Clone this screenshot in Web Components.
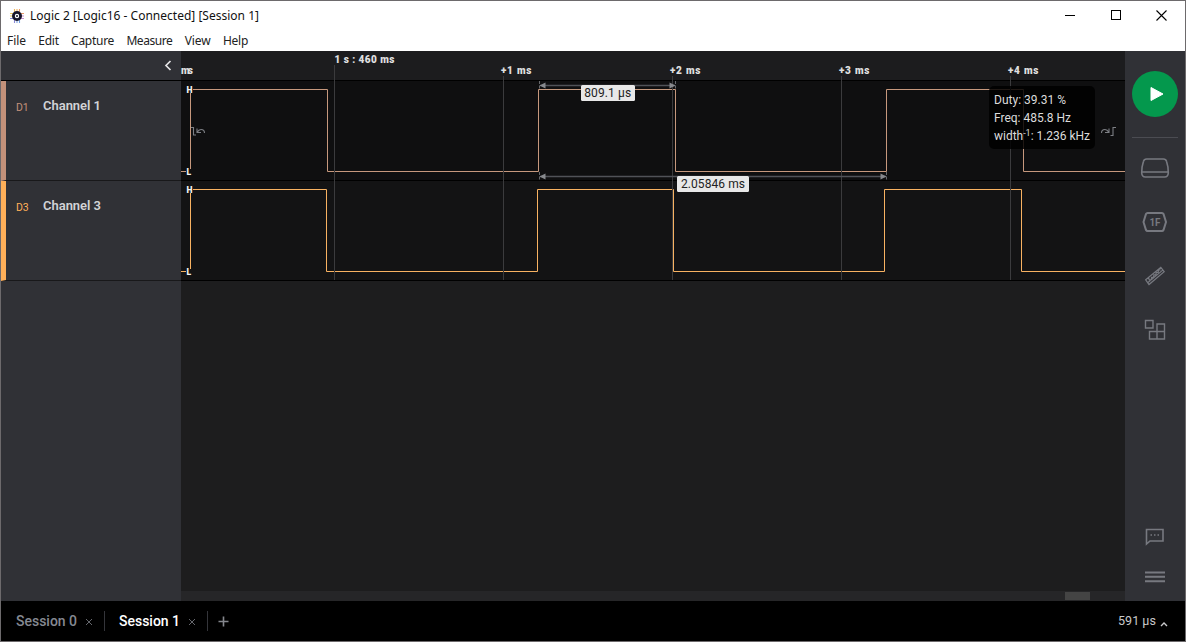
<!DOCTYPE html>
<html lang="en">
<head>
<meta charset="utf-8">
<title>Logic 2</title>
<style>
html,body{margin:0;height:100%;overflow:hidden;background:#000}
body{font-family:Roboto,"Liberation Sans",sans-serif}
</style>
</head>
<body>
<la-app></la-app>
<script>
const define=(name,html,setup)=>customElements.define(name,class extends HTMLElement{
  connectedCallback(){
    if(this.shadowRoot)return;
    const root=this.attachShadow({mode:'open'});
    root.innerHTML=typeof html==='function'?html(this):html;
    if(setup)setup(this,root);
  }
});

// A one-line label whose tracking is adjusted to fill a given width.
define('la-text',`<style>:host{display:block;white-space:nowrap;flex:none}span{display:inline-block}</style><span><slot></slot></span>`,
(el,root)=>{
  const w=+el.getAttribute('w'),s=root.querySelector('span');
  if(!w)return;
  el.style.width=w+'px';
  const n=el.textContent.length;
  s.style.letterSpacing=((w-s.getBoundingClientRect().width)/n)+'px';
});

define('la-titlebar',`<style>
:host{display:flex;align-items:center;height:29px;padding-left:9px;background:#fff;color:#111;font:12px "Noto Sans","Open Sans",sans-serif}
.logo{width:14px;height:14px;margin-right:6px}
.btns{display:flex;margin-left:auto;margin-right:1.5px}.btns svg{width:45.5px;height:29px}
</style>
<svg class="logo" viewBox="0 0 14 14"><g stroke-width="1.1"><path d="M4.500 0v3M7 0v3" stroke="#f0b45a"/><path d="M9.500 0v3M14 4.500h-3" stroke="#e99a6c"/><path d="M0 4.500h3M0 7h3" stroke="#ecc868"/><path d="M0 9.500h3M4.500 14v-3" stroke="#8a89d6"/><path d="M7 14v-3M9.500 14v-3" stroke="#75a0e2"/><path d="M14 7h-3M14 9.500h-3" stroke="#c490d2"/></g><circle cx="7" cy="7" r="3.600" fill="#fff" stroke="#17142a" stroke-width="2.800"/><circle cx="7" cy="7" r="1" fill="#17142a"/></svg>
<la-text w="229">Logic 2 [Logic16 - Connected] [Session 1]</la-text>
<div class="btns">
<svg viewBox="0 0 45.5 29"><path d="M18 14.500h10" stroke="#000"/></svg>
<svg viewBox="0 0 45.5 29"><path d="M18.500 9.500h9v9h-9z" fill="none" stroke="#000" shape-rendering="crispEdges"/></svg>
<svg viewBox="0 0 45.5 29"><path d="M18.500 9.500l10 10M28.500 9.500l-10 10" stroke="#000" stroke-width="1.100"/></svg>
</div>`);

define('la-menubar',`<style>
:host{display:flex;align-items:center;gap:12.3px;height:21px;padding-left:6px;background:#fff;color:#222;font:12px "Noto Sans","Open Sans",sans-serif}
la-text{margin-top:-1px}
</style><la-text w="19">File</la-text><la-text w="20.5">Edit</la-text><la-text w="43">Capture</la-text><la-text w="46">Measure</la-text><la-text w="26">View</la-text><la-text w="25">Help</la-text>`);

define('la-channel',el=>`<style>
:host{display:flex;height:99px;border-bottom:1px solid #18181a;border-left:5px solid ${el.getAttribute('color')};padding-left:10px;box-sizing:content-box}
.id{color:${el.getAttribute('color')};font-size:10.5px;line-height:12px;margin-top:21px;width:27px}
.name{color:#d2d3d6;font-size:13px;font-weight:600;line-height:16px;margin-top:17px}
</style><div class="id"><la-text w="12.5">${el.getAttribute('pin')}</la-text></div><div class="name"><la-text w="58">${el.getAttribute('name')}</la-text></div>`);

define('la-sidebar',`<style>
:host{display:block;width:180px;background:#303136;flex:none}
.top{display:flex;height:29px;border-bottom:1px solid #000;justify-content:flex-end;align-items:center}
svg{width:8px;height:11px;margin-right:9px}
</style><div class="top"><svg viewBox="0 0 8 11"><path d="M6.500 1L2 5.500 6.500 10" fill="none" stroke="#e4e4e6" stroke-width="1.700"/></svg></div>
<la-channel pin="D1" name="Channel 1" color="#c3917a"></la-channel>
<la-channel pin="D3" name="Channel 3" color="#ffb059"></la-channel>`);

define('la-ruler',`<style>
:host{display:block;height:29px;background:#1c1c1e;border-bottom:1px solid #000}
svg{display:block}text{font:900 10px Roboto,sans-serif;fill:#e0e0e1}
</style><svg width="944" height="29" viewBox="181 51 944 29">
<text x="181" y="74" textLength="12">ms</text>
<text x="334.5" y="62.5" textLength="60">1 s : 460 ms</text>
<text x="501" y="74" textLength="30.5">+1 ms</text><text x="670" y="74" textLength="30.5">+2 ms</text><text x="839" y="74" textLength="30.5">+3 ms</text><text x="1008" y="74" textLength="30.5">+4 ms</text>
</svg>`);

// Square wave with edges at absolute x positions; the signal starts low.
define('la-trace',el=>{
  const e=el.getAttribute('edges').split(',').map(Number);
  let d='M181 90.5H186M193 8.5H'+(e[1]+.5),hi=true;
  for(let i=1;i<e.length;i++){hi=!hi;d+='V'+(hi?8.5:90.5)+'H'+((e[i+1]??1125)+.5)}
  d+='M190.5 12V88';
  return `<style>
:host{display:block;height:99px;border-bottom:1px solid #000;background:${el.getAttribute('bg')}}
svg{display:block}text{font:900 8.5px Roboto,sans-serif;fill:#f4f4f4}
</style><svg width="944" height="99" viewBox="181 0 944 99">
<path d="${d}" fill="none" stroke="${el.getAttribute('color')}" stroke-width="1"/>
<text x="186.5" y="11.5">H</text><text x="186.5" y="94">L</text></svg>`});

define('la-grid',`<style>:host{position:absolute;left:0;top:0;pointer-events:none}svg{display:block}</style>
<svg width="944" height="230" viewBox="181 51 944 230"><path d="M334.500 65V280M503.500 76V280M672.500 76V280M841.500 76V280M1010.500 76V280" stroke="#3b3b3d"/></svg>`);

define('la-tag',`<style>:host{position:absolute;display:flex;align-items:center;justify-content:center;height:16px;border-radius:1.5px;background:#e8e8e8;color:#222;font-size:12px;line-height:16px}</style><slot></slot>`);

define('la-measure',`<style>
:host{position:absolute;left:0;top:0}svg{display:block}
.a{left:400px;top:34px;width:53.5px}.b{left:496px;top:125px;width:72px}
.tip{position:absolute;left:808px;top:35px;width:101px;height:58px;padding:5px 0 0 5px;border-radius:5px;background:rgba(0,0,0,.84);color:#dcdcdc;font-size:12px;line-height:18px}
sup{font-size:9px;line-height:0;vertical-align:4px}
</style><svg width="944" height="230" viewBox="181 51 944 230">
<path d="M540 85.500H675M540 176.500H886" stroke="#505257" stroke-width="1.500"/>
<path d="M539.500 81V90M675.500 81V90M539.500 172V181M886.500 172V181" stroke="#66686c" stroke-dasharray="3 1.500"/>
<path d="M539.500 85.500l6-3v6zM675.500 85.500l-6-3v6zM539.500 176.500l6-3v6zM886.500 176.500l-6-3v6z" fill="#87898d"/>
<g fill="none" stroke="#7d7f84" stroke-width="1.100"><path d="M191 127.500h2.500v7.500h2.500M204.500 133c0-2-1.500-3.500-3.500-3.500s-3 1.300-4 3M197 128.500v4h4"/><path d="M1101.500 133c0-2 1.500-3.500 3.500-3.500s3 1.300 4 3M1109 128.500v4h-4M1110.500 135.500h2.500v-8h3"/></g>
</svg><la-tag class="a"><la-text w="47">809.1 µs</la-text></la-tag><la-tag class="b"><la-text w="64">2.05846 ms</la-text></la-tag>
<div class="tip"><la-text w="72">Duty: 39.31 %</la-text><la-text w="77">Freq: 485.8 Hz</la-text><la-text w="96">width<sup>-1</sup>: 1.236 kHz</la-text></div>`);

define('la-plot',`<style>
:host{display:flex;flex-direction:column;position:relative;flex:1;background:#1d1d1e}
.scroll{margin-top:auto;height:10px;background:#262628;display:flex;justify-content:flex-end;align-items:center}
.thumb{width:25px;height:8px;margin-right:35px;background:#444}
</style><la-ruler></la-ruler>
<la-trace bg="#0f0f10" color="#c6987d" edges="190,327,538,675,886,1023"></la-trace>
<la-trace bg="#131314" color="#f8b262" edges="190,326,537,673,884,1021"></la-trace>
<la-grid></la-grid><la-measure></la-measure>
<div class="scroll"><div class="thumb"></div></div>`);

define('la-toolbar',`<style>
:host{display:flex;flex-direction:column;align-items:center;width:60px;background:#303136;flex:none}
.play{width:46px;height:46px;margin-top:20px;border-radius:50%;background:#04984d}
hr{width:46px;height:1px;border:0;background:#4b4c52;margin:20px 0 14px}
.i{width:32px;height:32px;margin-bottom:22px;fill:none;stroke:#777980;stroke-width:1.6}
text{font:bold 10.5px Roboto,sans-serif;fill:#777980;stroke:none}
.sp{flex:1}.c{margin-bottom:8px}.m{margin-bottom:8px}
</style>
<svg class="play" viewBox="0 0 46 46"><path d="M19 16.500L31 23 19 29.500Z" fill="#fff" stroke="#fff" stroke-linejoin="round"/></svg><hr>
<svg class="i" viewBox="0 0 32 32"><path d="M7.500 7h17q2.300 0 3 2.300c1.600 4.500 1.800 8 1.800 11.700q-.3 4-3.600 4H6.300q-3.300 0-3.600-4c0-3.700.2-7.200 1.800-11.700q.7-2.300 3-2.300zM2.500 19.700q.5.300 1.500.3h24q1 0 1.500-.3"/></svg>
<svg class="i" viewBox="0 0 32 32"><path d="M8.500 7h14.500q1 0 1.500 1l2.500 8-2.500 8q-.5 1-1.500 1H8.500q-1 0-1.500-1L4.500 16l2.500-8q.5-1 1.500-1z" stroke-width="2"/><text x="10.500" y="19.800" textLength="11" lengthAdjust="spacingAndGlyphs">1F</text></svg>
<svg class="i" viewBox="0 0 32 32"><path d="M6.700 19.800L21.800 7.300l3.400 4.400L10 24.500zM9.500 17.700l.8 2.200 2-.3.300-2.200 2-.3.300-2.200 2-.2.300-2.200 2-.3.300-2.200 2-.2M9 22.500L24 9.900" stroke-width="1.200"/></svg>
<svg class="i" viewBox="0 0 32 32"><path d="M6.500 6.500H14V14H6.500zM18 10h7.500v7.500H18zM10.500 17.500H18V25h-7.500zM18 17.500h7.500V25H18z" stroke-width="1.400"/></svg>
<div class="sp"></div>
<svg class="i c" viewBox="0 0 32 32"><path d="M7.500 8.500h16.500v11.500H11l-3.500 3z"/><path d="M11.500 14h1.500M15 14h1.500M18.500 14H20"/></svg>
<svg class="i m" viewBox="0 0 32 32"><path d="M6 11.500h20M6 15.800h20M6 20.200h20" stroke-width="1.900"/></svg>`);

define('la-tab',el=>`<style>
:host{display:flex;align-items:center;height:20px;color:${el.hasAttribute('active')?'#fff':'#858992'};font-size:14px;font-weight:500;border-right:1px solid #34353a;padding:0 10.5px 0 14.500px}
:host(:first-of-type){padding-left:15px}
la-text{margin-top:-1px}svg{width:8px;height:8px;margin:1px 0 0 8px}
</style><la-text w="61">${el.getAttribute('name')}</la-text><svg viewBox="0 0 8 8"><path d="M1 1l6 6M7 1L1 7" stroke="#65676d"/></svg>`);

define('la-footer',`<style>
:host{display:flex;align-items:center;height:40px;background:#000}
.plus{width:11px;height:11px;margin-left:10.5px}
.time{margin-left:auto;margin-top:-1px;color:#c9c9cb;font-size:12.500px}.up{width:8px;height:6px;margin:5px 17px 0 4px}
</style><la-tab name="Session 0"></la-tab><la-tab name="Session 1" active></la-tab>
<svg class="plus" viewBox="0 0 11 11"><path d="M5.500 .5v10M.5 5.500h10" stroke="#85878d" stroke-width="1.600"/></svg>
<la-text class="time" w="38">591 µs</la-text><svg class="up" viewBox="0 0 8 6"><path d="M1 5l3-3 3 3" fill="none" stroke="#c9c9cb" stroke-width="1.400"/></svg>`);

define('la-app',`<style>
:host{display:flex;flex-direction:column;box-sizing:border-box;width:1186px;height:642px;border:1px solid #6d6a6c}
.body{display:flex;height:550px}
</style><la-titlebar></la-titlebar><la-menubar></la-menubar>
<div class="body"><la-sidebar></la-sidebar><la-plot></la-plot><la-toolbar></la-toolbar></div>
<la-footer></la-footer>`);
</script>
</body>
</html>
